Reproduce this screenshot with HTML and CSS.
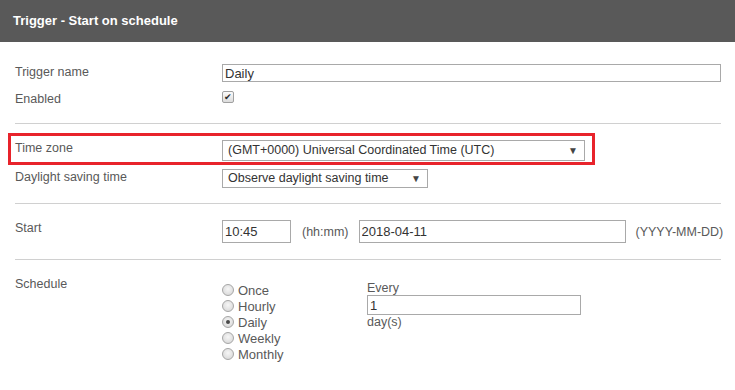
FILE: index.html
```html
<!DOCTYPE html>
<html lang="en">

<head>
    <meta charset="UTF-8">
    <title>Trigger - Start on schedule</title>
    <link rel="stylesheet" href="styles.css">
</head>

<body>
    <div class="dialog">
        <div class="header">Trigger - Start on schedule</div>
        <div class="content">
            <div class="group first">
                <div class="row">
                    <span class="lbl">Trigger name</span>
                    <input class="field name" type="text" value="Daily">
                </div>
                <div class="row enabled">
                    <span class="lbl">Enabled</span>
                    <span class="check">&#10004;</span>
                </div>
            </div>

            <div class="group second">
                <div class="marked">
                    <div class="row">
                        <span class="lbl">Time zone</span>
                        <span class="select tz">(GMT+0000) Universal Coordinated Time (UTC)</span>
                    </div>
                </div>
                <div class="row dst">
                    <span class="lbl">Daylight saving time</span>
                    <span class="select obs">Observe daylight saving time</span>
                </div>
            </div>

            <div class="group third">
                <div class="row">
                    <span class="lbl">Start</span>
                    <div class="startline">
                        <input class="field time" type="text" value="10:45">
                        <span class="hint">(hh:mm)</span>
                        <input class="field date" type="text" value="2018-04-11">
                        <span class="hint">(YYYY-MM-DD)</span>
                    </div>
                </div>
            </div>

            <div class="group last">
                <div class="row">
                    <span class="lbl">Schedule</span>
                    <div class="schedule">
                        <div class="radios">
                            <div class="opt"><span class="radio"></span>Once</div>
                            <div class="opt"><span class="radio"></span>Hourly</div>
                            <div class="opt"><span class="radio on"></span>Daily</div>
                            <div class="opt"><span class="radio"></span>Weekly</div>
                            <div class="opt"><span class="radio"></span>Monthly</div>
                        </div>
                        <div class="every">
                            <div class="small">Every</div>
                            <input class="field count" type="text" value="1">
                            <div class="small">day(s)</div>
                        </div>
                    </div>
                </div>
            </div>
        </div>
    </div>
</body>

</html>
```

FILE: styles.css
```css
body {
    margin: 0;
    background: #ffffff;
    font-family: 'Liberation Sans', Arial, sans-serif;
    color: #595959;
}

.header {
    height: 42px;
    line-height: 42px;
    background-color: #595959;
    color: #ffffff;
    font-weight: bold;
    font-size: 13px;
    padding-left: 13px;
}

.content {
    padding: 0 14px 0 15px;
}

.group {
    border-bottom: 1px solid #d0d0d0;
}

.group.last {
    border-bottom: none;
}

.first {
    padding: 22px 0 17px;
}

.second {
    padding: 9px 0 15px;
}

.third {
    padding: 16px 0 16px;
}

.last {
    padding-top: 16px;
}

.row {
    display: grid;
    grid-template-columns: 207px 1fr;
    align-items: start;
}

.lbl {
    font-size: 12.5px;
    line-height: 14px;
    padding-top: 1px;
}

.field {
    box-sizing: border-box;
    margin: 0;
    border: 1px solid #a9a9a9;
    font-family: 'Liberation Sans', Arial, sans-serif;
    font-size: 13px;
    color: #333333;
    padding: 0 2px;
    outline: none;
}

.name {
    height: 18px;
    width: 499px;
}

.enabled {
    margin-top: 9px;
}

.check {
    box-sizing: border-box;
    width: 12px;
    height: 12px;
    border: 1px solid #a0a0a0;
    border-radius: 2px;
    background: linear-gradient(#fbfbfb, #dcdcdc);
    color: #2b2b2b;
    font-size: 9px;
    line-height: 10px;
    text-align: center;
}

/* red highlight round the time zone row */
.marked {
    margin-left: -7px;
    width: 570px;
    border: 3px solid #e8232b;
    padding: 4px 7px 1px 4px;
}

.select {
    position: relative;
    box-sizing: border-box;
    border: 1px solid #a9a9a9;
    font-size: 12.5px;
    color: #333333;
    padding-left: 5px;
    white-space: nowrap;
}

.select::after {
    content: "\25BC";
    position: absolute;
    right: 6px;
    top: 0;
    font-size: 10px;
    color: #444444;
    line-height: inherit;
}

.tz {
    width: 363px;
    height: 21px;
    line-height: 19px;
}

.dst {
    margin-top: 4px;
}

.obs {
    width: 206px;
    height: 19px;
    line-height: 17px;
}

.startline {
    display: flex;
    align-items: center;
    white-space: nowrap;
}

.time {
    width: 69px;
    height: 23px;
    flex-shrink: 0;
}

.date {
    width: 267px;
    height: 23px;
    flex-shrink: 0;
}

.hint {
    font-size: 12.5px;
    margin: 0 10px 0 11px;
}

.hint:last-child {
    margin: 0 0 0 10px;
}

.schedule {
    display: flex;
}

.radios {
    width: 145px;
    margin-top: 6px;
}

.opt {
    display: flex;
    align-items: center;
    height: 16px;
    font-size: 13px;
    color: #595959;
}

.radio {
    box-sizing: border-box;
    width: 12px;
    height: 12px;
    border-radius: 50%;
    border: 1px solid #a6a6a6;
    background: radial-gradient(circle at 50% 40%, #f6f6f6, #d3d3d3);
    margin-right: 4px;
    position: relative;
}

.radio.on::after {
    content: "";
    position: absolute;
    left: 3px;
    top: 3px;
    width: 4px;
    height: 4px;
    border-radius: 50%;
    background: #4a4a4a;
}

.every {
    margin-top: 5px;
}

.small {
    font-size: 12.5px;
    line-height: 14px;
}

.count {
    width: 214px;
    height: 20px;
    display: block;
}
```
